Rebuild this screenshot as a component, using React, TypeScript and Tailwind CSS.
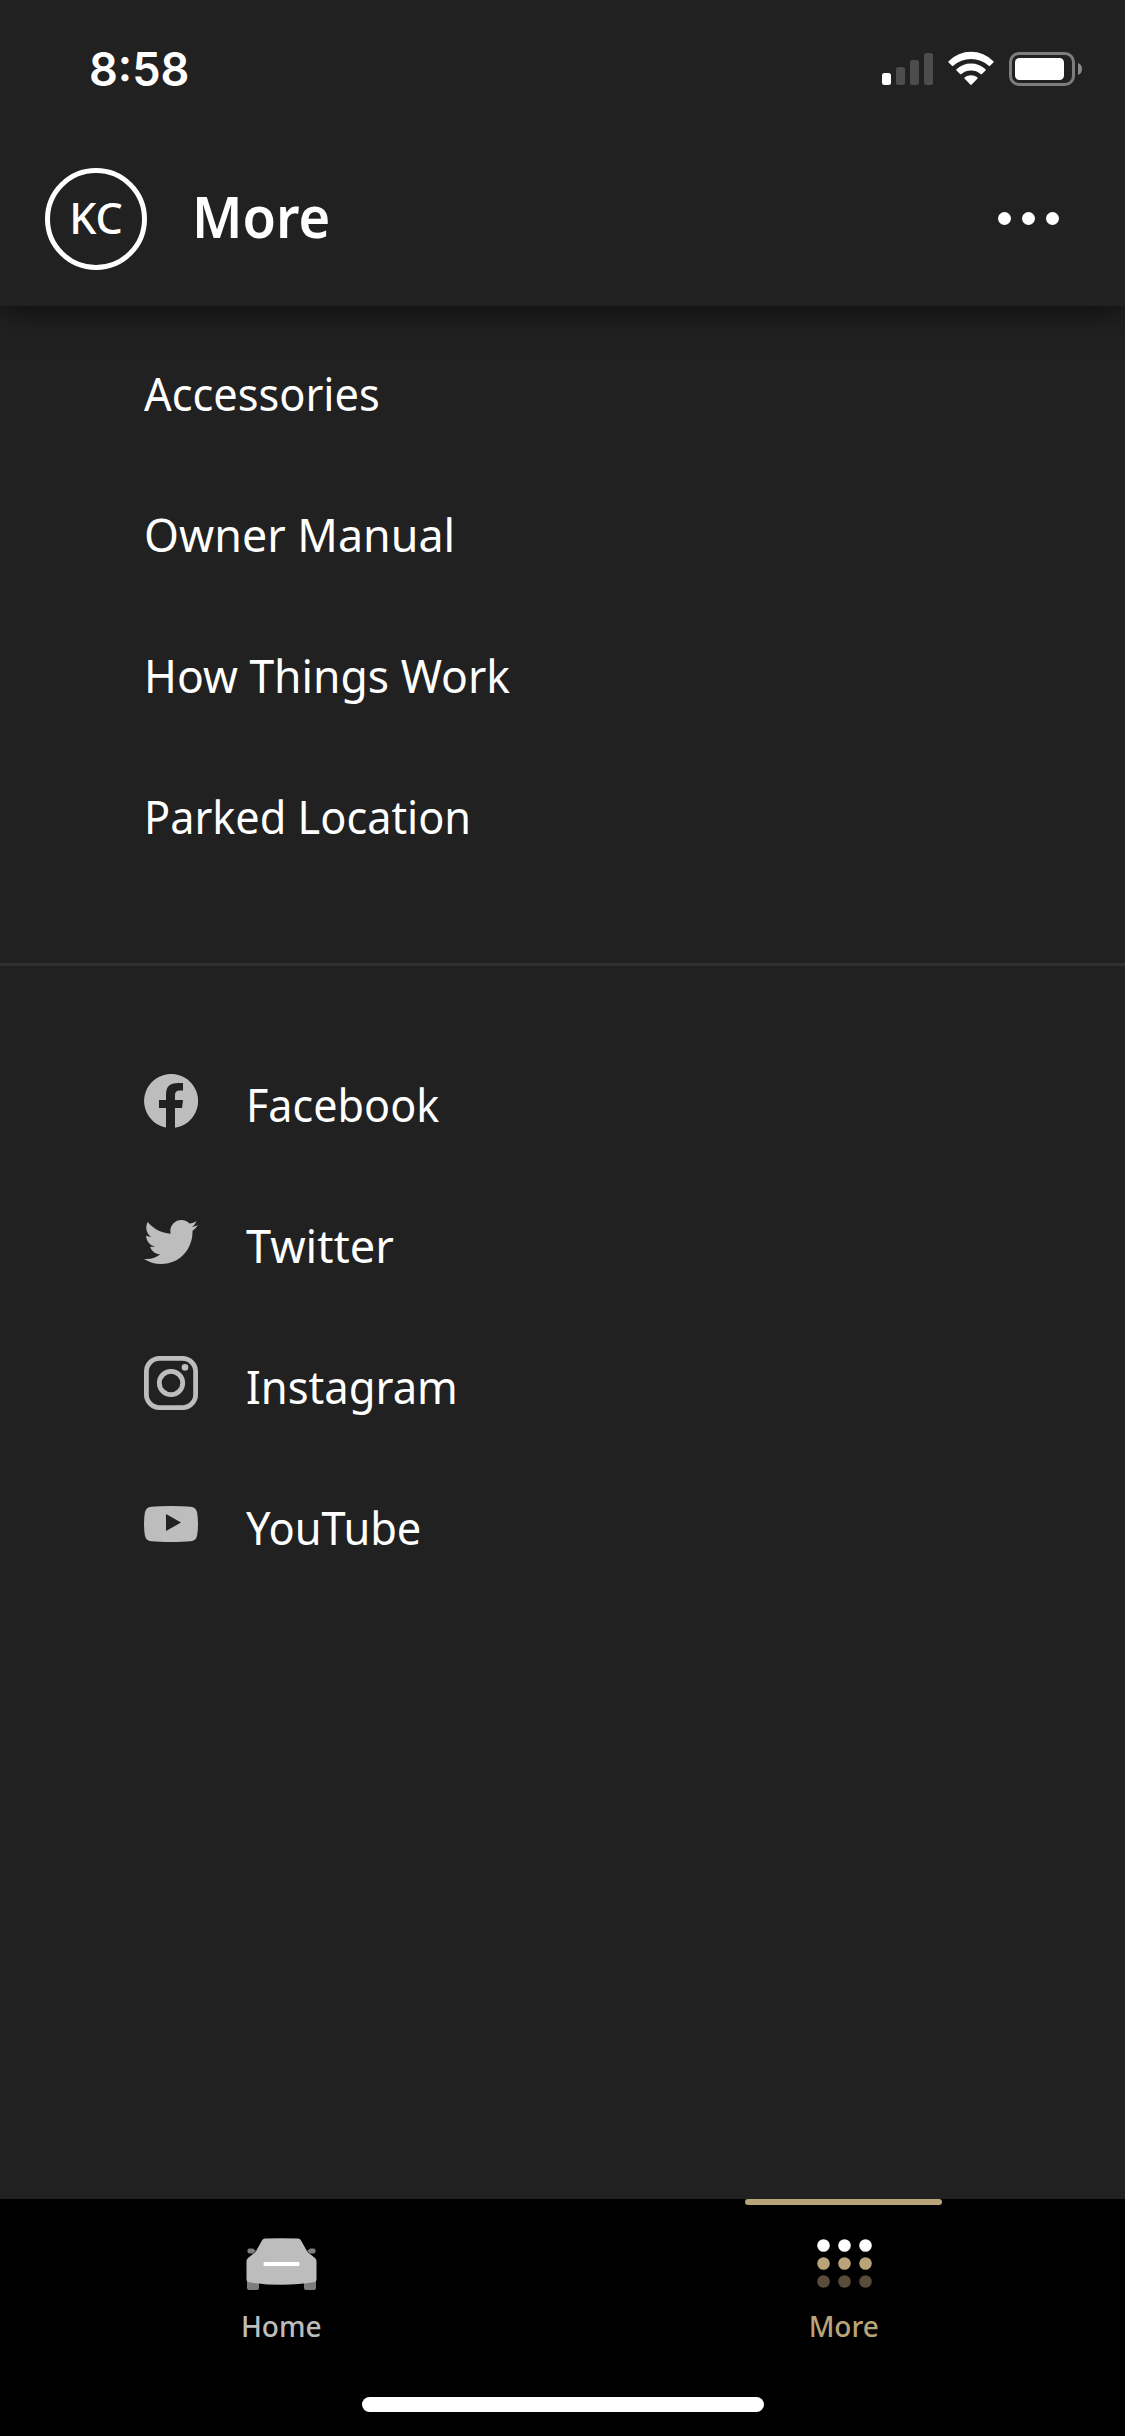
import { FaTwitter } from "react-icons/fa";

const links = [
  { label: "Accessories", fit: "scale-x-[0.942]" },
  { label: "Owner Manual", fit: "scale-x-[0.974]" },
  { label: "How Things Work", fit: "scale-x-[0.966]" },
  { label: "Parked Location", fit: "scale-x-[0.94]" },
];

function FacebookIcon() {
  return (
    <svg width="54" height="54" viewBox="0 0 54 54" fill="currentColor">
      <path d="M22 53.5A27 27 0 1 1 31 53.7V34H38L39 26H31V21Q31 16.5 35.5 16.5H39V9H34Q22 9 22 20V26H15V34H22Z" />
    </svg>
  );
}

function TwitterIcon() {
  return <FaTwitter size={54} />;
}

function InstagramIcon() {
  return (
    <svg width="54" height="54" viewBox="0 0 54 54" fill="none" stroke="currentColor" strokeWidth="4.8">
      <rect x="2.4" y="2.4" width="49.2" height="49.2" rx="13.2" />
      <circle cx="27" cy="27" r="11.7" />
      <circle cx="41" cy="11.4" r="3.3" fill="currentColor" stroke="none" />
    </svg>
  );
}

function YouTubeIcon() {
  return (
    <svg width="54" height="54" viewBox="0 0 54 54" fill="currentColor">
      <path
        fillRule="evenodd"
        d="M27 9Q39 9 46.500 9.700Q52.300 10.300 53.200 16Q54 21 54 27Q54 33 53.200 38Q52.300 43.700 46.500 44.300Q39 45 27 45Q15 45 7.500 44.300Q1.700 43.700.8 38Q0 33 0 27Q0 21 .8 16Q1.700 10.300 7.500 9.700Q15 9 27 9ZM22 17V34L37 25.500Z"
      />
    </svg>
  );
}

const socials = [
  { label: "Facebook", Icon: FacebookIcon, fit: "scale-x-[0.937]" },
  { label: "Twitter", Icon: TwitterIcon, fit: "scale-x-[0.98]" },
  { label: "Instagram", Icon: InstagramIcon, fit: "scale-x-[0.947]" },
  { label: "YouTube", Icon: YouTubeIcon, fit: "scale-x-[0.943]" },
];

function StatusBar() {
  return (
    <div className="flex h-[132px] items-start justify-between pt-[49px] pr-[43px] pl-[89px] text-white">
      <span className="origin-left scale-x-[0.98] font-['Inter'] text-[46px] leading-[40px] font-semibold">8:58</span>
      <svg width="200" height="40" viewBox="882 49 200 40" fill="white">
        <rect x="882" y="73" width="9" height="12" rx="2.500" />
        <g fill="#4d4d4d">
          <rect x="896" y="67" width="9" height="18" rx="2.500" />
          <rect x="910" y="60" width="9" height="25" rx="2.500" />
          <rect x="924" y="53" width="9" height="32" rx="2.500" />
        </g>
        <path d="M948.600 61.200A31.500 31.500 0 0 1 993.400 61.200Q994 62 993.400 62.600L990 65.800Q989.300 66.300 988.700 65.700A26.500 26.500 0 0 0 953.300 65.700Q952.700 66.300 952 65.800L948.600 62.600Q948 62 948.600 61.200Z" />
        <path d="M956.500 69.200A21.500 21.500 0 0 1 985.500 69.200Q986 69.900 985.500 70.500L981.900 74Q981.300 74.500 980.600 74A15 15 0 0 0 961.400 74Q960.700 74.500 960.100 74L956.500 70.500Q956 69.900 956.500 69.200Z" />
        <path d="M964.700 77.300A10.500 10.500 0 0 1 977.300 77.300Q977.900 78 977.300 78.700L971.700 84.500Q971 85.300 970.300 84.500L964.700 78.700Q964.100 78 964.700 77.300Z" />
        <rect x="1010.500" y="53.500" width="63" height="31" rx="8.500" fill="none" stroke="#7d7d7d" strokeWidth="3" />
        <rect x="1015" y="58" width="49" height="22" rx="4.500" />
        <path d="M1078 63Q1082 64.500 1082 69Q1082 73.500 1078 75Z" fill="#8a8a8a" />
      </svg>
    </div>
  );
}

function Header() {
  return (
    <header className="relative z-10 h-[306px] shrink-0 bg-[#212121] shadow-[0_6px_30px_rgba(0,0,0,0.6)]">
      <StatusBar />
      <div className="flex h-[174px] items-center pr-[66px] pl-[45px]">
        <div className="flex size-[102px] items-center justify-center rounded-full border-[5px] border-white">
          <span className="mb-[3px] text-[43px] leading-none font-medium">KC</span>
        </div>
        <h1 className="mb-[5px] ml-[45px] origin-left scale-x-[0.953] text-[57px] leading-none font-semibold">More</h1>
        <div className="mb-[2px] ml-auto flex gap-[11px]">
          <i className="size-[13px] rounded-full bg-white" />
          <i className="size-[13px] rounded-full bg-white" />
          <i className="size-[13px] rounded-full bg-white" />
        </div>
      </div>
    </header>
  );
}

function CarIcon() {
  return (
    <svg width="72" height="54" viewBox="245 2237 72 54">
      <g fill="#7d7d7d">
        <path d="M247 2280H259V2288Q259 2290 257 2290H249Q247 2290 247 2288Z" />
        <path d="M304 2280H316V2288Q316 2290 314 2290H306Q304 2290 304 2288Z" />
        <path d="M249 2248.500H253L256 2251L253 2253.500H249.500Q247.500 2253.500 247.500 2251.500V2250Q247.500 2248.500 249 2248.500Z" />
        <path d="M314 2248.500H310L307 2251L310 2253.500H313.500Q315.500 2253.500 315.500 2251.500V2250Q315.500 2248.500 314 2248.500Z" />
      </g>
      <path
        fill="#bdbdbd"
        d="M265 2238.600Q281.500 2237.800 298 2238.600Q300 2238.700 301 2240.500L307.500 2252L315 2258Q316.500 2259.300 316.500 2261V2279.500Q316.500 2281.500 314.500 2282Q299 2284.800 281.500 2284.800Q264 2284.800 248.500 2282Q246.500 2281.500 246.500 2279.500V2261Q246.500 2259.300 248 2258L255.500 2252L262 2240.500Q263 2238.700 265 2238.600Z"
      />
      <rect x="263.500" y="2262" width="36" height="4" rx="1.500" fill="white" />
    </svg>
  );
}

function DotsIcon() {
  return (
    <svg width="72" height="54" viewBox="808 2237 72 54">
      {["#ffffff", "#b9a479", "#5a4c3b"].map((fill, row) =>
        [0, 1, 2].map((col) => (
          <circle key={`${row}-${col}`} cx={823.5 + col * 21} cy={2245.5 + row * 18} r="6.300" fill={fill} />
        ))
      )}
    </svg>
  );
}

function TabBar() {
  return (
    <nav className="relative flex h-[237px] shrink-0 bg-black">
      <div className="flex flex-1 flex-col items-center pt-[38px] text-[#bdbdbd]">
        <CarIcon />
        <span className="mt-4 text-[28px] leading-[38px] font-medium">Home</span>
      </div>
      <div className="flex flex-1 flex-col items-center text-[#b9a479]">
        <div className="mb-8 h-[6px] w-[197px] rounded-full bg-[#b9a479]" />
        <DotsIcon />
        <span className="mt-4 text-[28px] leading-[38px] font-medium">More</span>
      </div>
      <div className="absolute bottom-6 left-1/2 h-[15px] w-[402px] -translate-x-1/2 rounded-full bg-white" />
    </nav>
  );
}

export default function App() {
  return (
    <div className="flex h-[2436px] w-[1125px] flex-col overflow-hidden bg-[#212121] font-['Noto_Sans',sans-serif] text-white">
      <Header />
      <main className="flex-1">
        <ul className="pt-4">
          {links.map(({ label, fit }) => (
            <li key={label} className="flex h-[141px] items-center pl-36 text-[46px] leading-none">
              <span className={`origin-left ${fit}`}>{label}</span>
            </li>
          ))}
        </ul>
        <hr className="mt-[77px] border-0 border-t-[3px] border-[#303030]" />
        <ul className="pt-[67px]">
          {socials.map(({ label, Icon, fit }) => (
            <li key={label} className="flex h-[141px] items-center pl-36 text-[46px] leading-none">
              <span className="mb-[5px] w-[102px] text-[#bdbdbd]">
                <Icon />
              </span>
              <span className={`origin-left ${fit}`}>{label}</span>
            </li>
          ))}
        </ul>
      </main>
      <TabBar />
    </div>
  );
}
